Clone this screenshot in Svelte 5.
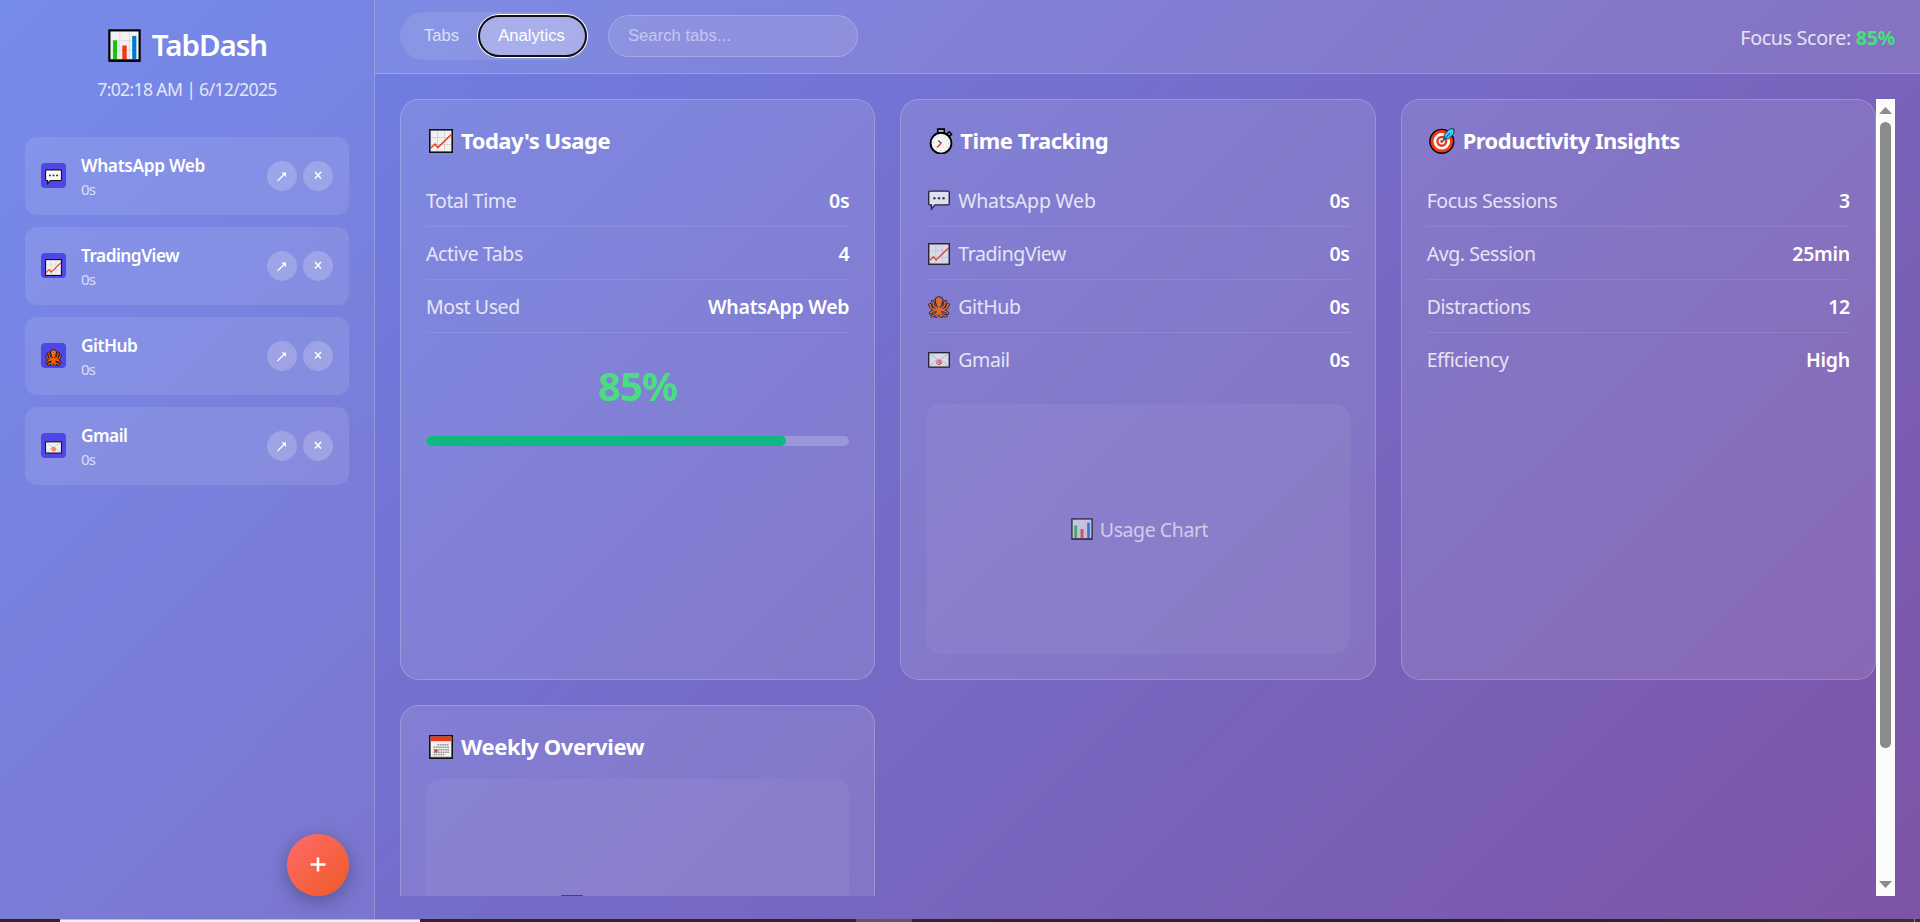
<script>
  const tabs = [
    { name: 'WhatsApp Web', icon: 'speech', wide: true },
    { name: 'TradingView', icon: 'trend' },
    { name: 'GitHub', icon: 'octopus' },
    { name: 'Gmail', icon: 'mail' }
  ];
  const usage = [
    ['Total Time', '0s'],
    ['Active Tabs', '4'],
    ['Most Used', 'WhatsApp Web']
  ];
  const insights = [
    ['Focus Sessions', '3'],
    ['Avg. Session', '25min'],
    ['Distractions', '12'],
    ['Efficiency', 'High']
  ];
  const score = 85;
  const arms = 'M9.5 12.5Q6.2 12.5 6 9.5T4.8 5.8M14.5 12.5Q17.800 12.500 18 9.500T19.200 5.800M9.500 14.500Q3.400 14.500 3 11.500T1.800 9.600M14.500 14.500Q20.600 14.500 21 11.500T22.200 9.600M10 15.800Q4.500 15.500 2.600 18.800M14 15.800Q19.500 15.500 21.400 18.800M10.600 16.800Q9.500 20.500 4.400 21.800M13.400 16.800Q14.500 20.500 19.600 21.800M11.400 17Q11.600 20.800 9 22.400M12.600 17Q12.400 20.800 15 22.400';
</script>

{#snippet icon(kind, size)}
  <svg class="icon {kind}" width={size} height={size} viewBox="0 0 24 24" fill="none">
    {#if kind === 'bars'}
      <rect x="1" y="1" width="22" height="22" fill="#f2f2f2" stroke="#000" stroke-width="1.6" />
      <path d="M8.5 2v20M15.5 2v20M2 8.5h20M2 15.5h20" stroke="#d8d8d8" stroke-width=".6" />
      <path d="M3.6 8.2h3V22h-3z" fill="#16c60c" />
      <path d="M10.4 12h3.2v10h-3.2z" fill="#f03a17" />
      <path d="M17.6 5h3v17h-3z" fill="#0078d7" />
      <path d="M1 23h22" stroke="#000" stroke-width="1.6" />
    {:else if kind === 'trend'}
      <rect x=".8" y=".8" width="22.4" height="22.4" fill="#f2f2f2" stroke="#111" stroke-width="1.6" />
      <path d="M8.5 2v20M15.5 2v20M2 8.5h20M2 15.5h20" stroke="#ccc" stroke-width=".8" />
      <path d="M1.6 19.2l4.4-4.2 2.8 3.6L22.6 5.2" stroke="#f03a17" stroke-width="1.5" />
    {:else if kind === 'speech'}
      <path d="M2.5 1.2h19q1.7 0 1.7 1.7v11.6q0 1.7-1.7 1.7H7.6L3.8 20.6V16.2H2.5q-1.7 0-1.7-1.7V2.9q0-1.7 1.7-1.7z" fill="#f8f8f8" stroke="#111" stroke-width="1.5" />
      <circle cx="7" cy="9" r="1.4" fill="#333" /><circle cx="12" cy="9" r="1.4" fill="#333" /><circle cx="17" cy="9" r="1.4" fill="#333" />
    {:else if kind === 'octopus'}
      <path d={arms} stroke="#111" stroke-width="3.400" stroke-linecap="round" />
      <path d="M12 .8C8.600.800 7.400 3.400 7.800 6c.3 1.800 1.400 2.800 1.200 4.800L8.600 16q3.400 3 6.800 0L15 10.800c-.2-2 .9-3 1.200-4.800.4-2.600-.8-5.200-4.200-5.200z" fill="#f7630c" stroke="#111" stroke-width="1.300" />
      <path d={arms} stroke="#f7630c" stroke-width="1.700" stroke-linecap="round" />
      <circle cx="10.500" cy="12" r=".8" fill="#331a0a" /><circle cx="13.500" cy="12" r=".8" fill="#331a0a" />
    {:else if kind === 'mail'}
      <rect x=".8" y="4" width="22.400" height="15.800" fill="#f2f2f2" stroke="#111" stroke-width="1.500" />
      <path d="M2 5l10 7.500L22 5M2 19l7-7M22 19l-7-7" stroke="#bbb" stroke-width="1" />
      <circle cx="12" cy="14.500" r="2.600" stroke="#f03a17" stroke-width="1" />
      <path d="M13 13.200v2.600h2M13 14.500a1 1 0 1 1-2 0 1 1 0 0 1 2 0" stroke="#f03a17" stroke-width=".8" />
    {:else if kind === 'watch'}
      <path d="M9 1h6v4H9zM17.500 5.500l2-2 2.200 2.200-2 2z" fill="#bbb" stroke="#000" stroke-width="1.500" />
      <circle cx="12" cy="14" r="9.600" fill="#f5f5f5" stroke="#000" stroke-width="1.700" />
      <circle cx="12" cy="14" r="7" stroke="#bbb" stroke-width=".8" stroke-dasharray="1 2.660" />
      <path d="M9.300 11.700l3 2.300" stroke="#222" stroke-width="1" />
      <path d="M12.300 14l-4 4" stroke="#e81224" stroke-width="1" />
    {:else if kind === 'target'}
      <circle cx="11.800" cy="12.300" r="11" fill="#f03a17" stroke="#000" stroke-width="1.300" />
      <circle cx="11.800" cy="12.300" r="6.400" stroke="#fff" stroke-width="2.500" />
      <circle cx="11.800" cy="12.300" r="2.200" fill="#f03a17" stroke="#fff" stroke-width="1.400" />
      <path d="M12 12.500l6-6" stroke="#0063b1" stroke-width="1.500" />
      <path d="M14 10V6.200L18.600 1.200 20 .8h3v3l-.6 2L18 10z" fill="#31d2f7" stroke="#111" stroke-width=".7" />
      <path d="M14.500 9.700l5-5" stroke="#0078d7" stroke-width="1.200" />
    {:else if kind === 'calendar'}
      <rect x=".8" y=".8" width="22.400" height="22.400" fill="#f2f2f2" stroke="#111" stroke-width="1.600" />
      <path d="M1.600 1.600h20.800v4.600H1.600z" fill="#f03a17" />
      <path d="M8.500 9.800H20M4.500 12.300H20M4.500 14.800H20M4.500 17.300H20M4.500 19.500h11" stroke="#999" stroke-width="1.500" stroke-dasharray="1.700 .6" />
      <circle cx="7" cy="16" r="1.700" fill="#f03a17" />
      <path d="M1.600 22.300h20.800" stroke="#444" stroke-width="1" />
    {/if}
  </svg>
{/snippet}

{#snippet rows(list, open)}
  {#each list as [label, value], i}
    <div class="row" class:last={open && i === list.length - 1}>
      <span class="label">{label}</span><span class="value">{value}</span>
    </div>
  {/each}
{/snippet}

<div class="screen">
  <div class="app">
    <aside>
      <h1>{@render icon('bars', 33)}<span>TabDash</span></h1>
      <p class="clock">7:02:18 AM | 6/12/2025</p>
      <div class="tablist">
        {#each tabs as tab}
          <div class="tab">
            <div class="badge">{@render icon(tab.icon, 17)}</div>
            <div class="info">
              <div class="name" class:wide={tab.wide}>{tab.name}</div>
              <div class="time">0s</div>
            </div>
            <button class="round" aria-label="Open">
              <svg width="12" height="12" viewBox="0 0 12 12"><path d="M1.500 11L9 3.500" stroke="#fff" stroke-width="1.300" /><path d="M5.500 2.500H10V7z" fill="#fff" /></svg>
            </button>
            <button class="round" aria-label="Close">
              <svg width="12" height="12" viewBox="0 0 12 12"><path d="M3 2l6 6.500M9 2L3 8.500" stroke="#fff" stroke-width="1.500" /></svg>
            </button>
          </div>
        {/each}
      </div>
      <button class="add" aria-label="Add tab">
        <svg width="16" height="16" viewBox="0 0 16 16"><path d="M8 .5v14M.5 7.500h15" stroke="#fff" stroke-width="2.500" /></svg>
      </button>
    </aside>

    <main>
      <header>
        <div class="switch">
          <button class="mode first">Tabs</button>
          <button class="mode active">Analytics</button>
        </div>
        <input placeholder="Search tabs..." />
        <div class="focus"><span>Focus Score:</span> <strong>{score}%</strong></div>
      </header>

      <div class="body">
        <div class="view">
          <div class="grid">
            <section>
              <h2>{@render icon('trend', 24)}<span>Today's Usage</span></h2>
              {@render rows(usage, false)}
              <div class="score">{score}%</div>
              <div class="bar"><div class="fill" style="width: {score}%"></div></div>
            </section>
            <section>
              <h2 class="tt">{@render icon('watch', 26)}<span>Time Tracking</span></h2>
              {#each tabs as tab, i}
                <div class="row" class:last={i === 3}>
                  <span class="label withicon" class:wide={tab.wide}>{@render icon(tab.icon, 22)}<span>{tab.name}</span></span>
                  <span class="value">0s</span>
                </div>
              {/each}
              <div class="chart spaced"><div class="caption">{@render icon('bars', 22)}<span>Usage Chart</span></div></div>
            </section>
            <section>
              <h2 class="pi">{@render icon('target', 26)}<span>Productivity Insights</span></h2>
              {@render rows(insights, true)}
            </section>
            <section>
              <h2 class="wo">{@render icon('calendar', 24)}<span>Weekly Overview</span></h2>
              <div class="chart"><div class="caption weekly">{@render icon('bars', 22)}</div></div>
            </section>
          </div>
        </div>
        <div class="scroll">
          <svg width="13" height="7" viewBox="0 0 13 7"><path d="M0 7L6.500 0 13 7z" fill="#8b8b8b" /></svg>
          <div class="thumb"></div>
          <svg width="13" height="7" viewBox="0 0 13 7"><path d="M0 0h13L6.500 7z" fill="#8b8b8b" /></svg>
        </div>
      </div>
    </main>
  </div>
  <div class="strip"><i class="white"></i><i class="grey"></i><i class="tick"></i></div>
</div>

<style>
  :global(body) { margin: 0; overflow: hidden; }
  * { box-sizing: border-box; }
  .screen { width: 1920px; height: 922px; font-family: "Noto Sans", "Open Sans", sans-serif; color: #fff; font-size: 20px; overflow: hidden; }
  .app { height: 919px; display: flex; background: linear-gradient(135deg, #667eea 0%, #764ba2 100%); }
  .icon { flex: none; display: block; }
  button { font: inherit; color: inherit; border: 0; padding: 0; display: flex; align-items: center; justify-content: center; }

  aside { width: 375px; flex: none; padding: 25px 25px 23px; background: rgba(255, 255, 255, .1); border-right: 1px solid rgba(255, 255, 255, .2); display: flex; flex-direction: column; }
  h1 { margin: 0; height: 41px; display: flex; align-items: center; justify-content: center; gap: 11px; font-size: 29.500px; font-weight: 600; line-height: 41px; letter-spacing: -1px; padding-left: 1px; }
  h1 span { margin-top: -2px; }
  .clock { margin: 11px 0 35px; height: 25px; line-height: 25px; text-align: center; font-size: 17.700px; opacity: .8; letter-spacing: -.7px; }
  .tablist { flex: 1; display: flex; flex-direction: column; gap: 12px; }
  .tab { height: 78px; padding: 0 16px; display: flex; align-items: center; border-radius: 12px; background: rgba(255, 255, 255, .1); }
  .badge { width: 25px; height: 25px; margin: 0 15px 1px 0; border-radius: 4px; background: #4f46e5; display: flex; align-items: center; justify-content: center; padding-top: 3px; }
  .info { flex: 1; padding-top: 3px; }
  .name { font-size: 17.300px; font-weight: 600; line-height: 24px; letter-spacing: -.52px; }
  .name.wide { letter-spacing: -.32px; }
  .time { font-size: 15px; line-height: 23px; opacity: .7; letter-spacing: -.8px; }
  .round { width: 30px; height: 30px; border-radius: 50%; background: rgba(255, 255, 255, .2); }
  .round + .round { margin-left: 6px; }
  .add { align-self: flex-end; width: 62px; height: 62px; border-radius: 50%; background: linear-gradient(135deg, #ff6b6b, #ee5a24); box-shadow: 0 5px 19px rgba(0, 0, 0, .3); }

  main { flex: 1; display: flex; flex-direction: column; min-width: 0; background: rgba(255, 255, 255, .05); }
  header { height: 74px; padding: 0 25px; display: flex; align-items: flex-start; background: rgba(255, 255, 255, .1); border-bottom: 1px solid rgba(255, 255, 255, .2); }
  .switch { margin-top: 12px; width: 188px; height: 48px; border-radius: 24px; background: rgba(255, 255, 255, .1); display: flex; align-items: center; }
  .mode { height: 42px; background: none; font-family: "Liberation Sans", Arial, sans-serif; font-size: 16.667px; border-radius: 21px; }
  .first { width: 78px; padding-left: 5px; opacity: .7; }
  .active { width: 109px; padding-right: 2px; background: rgba(255, 255, 255, .25); box-shadow: inset 0 0 0 2px #101010, 0 0 0 1px #fff; }
  input { margin: 15px 0 0 20px; width: 250px; height: 42px; padding: 0 19px; border-radius: 21px; border: 1px solid rgba(255, 255, 255, .2); background: rgba(255, 255, 255, .1); font: 16.667px "Liberation Sans", Arial, sans-serif; color: #fff; outline: none; }
  input::placeholder { color: rgba(255, 255, 255, .5); opacity: 1; }
  .focus { margin: 24px 0 0 auto; line-height: 28px; font-size: 19.700px; letter-spacing: -.33px; }
  .focus span { opacity: .8; }
  .focus strong { color: #4ade80; }

  .body { height: 797px; margin: 25px 25px 0; display: flex; }
  .view { flex: 1; overflow: hidden; }
  .grid { display: grid; grid-template-columns: repeat(3, 1fr); grid-template-rows: 581px 350px; gap: 25px; }
  section { padding: 25px; border: 1px solid rgba(255, 255, 255, .2); border-radius: 19px; background: rgba(255, 255, 255, .1); }
  h2 { margin: 0 0 18px; padding-left: 3px; height: 31px; display: flex; align-items: center; gap: 8px; font-size: 22px; line-height: 31px; font-weight: 700; letter-spacing: -.48px; }
  h2.tt { padding-left: 2px; gap: 6px; letter-spacing: -.43px; }
  h2.pi { padding-left: 2px; letter-spacing: -.55px; }
  h2.wo { margin-bottom: 17px; letter-spacing: -.4px; }
  .row { height: 53px; padding-top: 2px; display: flex; align-items: center; justify-content: space-between; border-bottom: 1px solid rgba(255, 255, 255, .1); font-size: 19.500px; line-height: 28px; }
  .row.last { border: 0; height: 52px; }
  .label { opacity: .8; letter-spacing: -.42px; }
  .withicon { display: flex; align-items: center; gap: 8px; padding-left: 2px; }
  .withicon.wide { letter-spacing: -.2px; }
  .value { font-weight: 600; letter-spacing: -.25px; }
  .score { height: 56px; margin-top: 25px; line-height: 56px; font-size: 40px; font-weight: 700; letter-spacing: -.8px; color: #4ade80; text-align: center; }
  .bar { margin-top: 22px; height: 10px; border-radius: 5px; background: rgba(255, 255, 255, .2); overflow: hidden; }
  .fill { height: 100%; background: #10b981; border-radius: 5px; }
  .chart { height: 250px; border-radius: 15px; background: rgba(255, 255, 255, .05); display: flex; align-items: center; justify-content: center; }
  .spaced { margin-top: 19px; }
  .caption { display: flex; align-items: center; gap: 7px; padding-left: 3px; opacity: .6; font-size: 19.500px; letter-spacing: -.42px; }
  .caption.weekly { width: 154px; padding: 4px 0 0; }

  .scroll { width: 19px; flex: none; padding: 8px 0; background: #fcfcfc; display: flex; flex-direction: column; align-items: center; justify-content: space-between; }
  .thumb { width: 11px; height: 626px; margin: 8px 0 auto; border-radius: 6px; background: #8b8b8b; }

  .strip { height: 3px; background: linear-gradient(90deg, #33251f 0 50%, #222 75%, #33332e); display: flex; }
  .white { width: 360px; margin-left: 60px; background: #f2f0ee; border-top: 1px solid #bbb; }
  .grey { width: 56px; margin-left: 436px; background: #65564f; }
  .tick { width: 1px; margin-left: 1002px; background: #888; }
</style>
